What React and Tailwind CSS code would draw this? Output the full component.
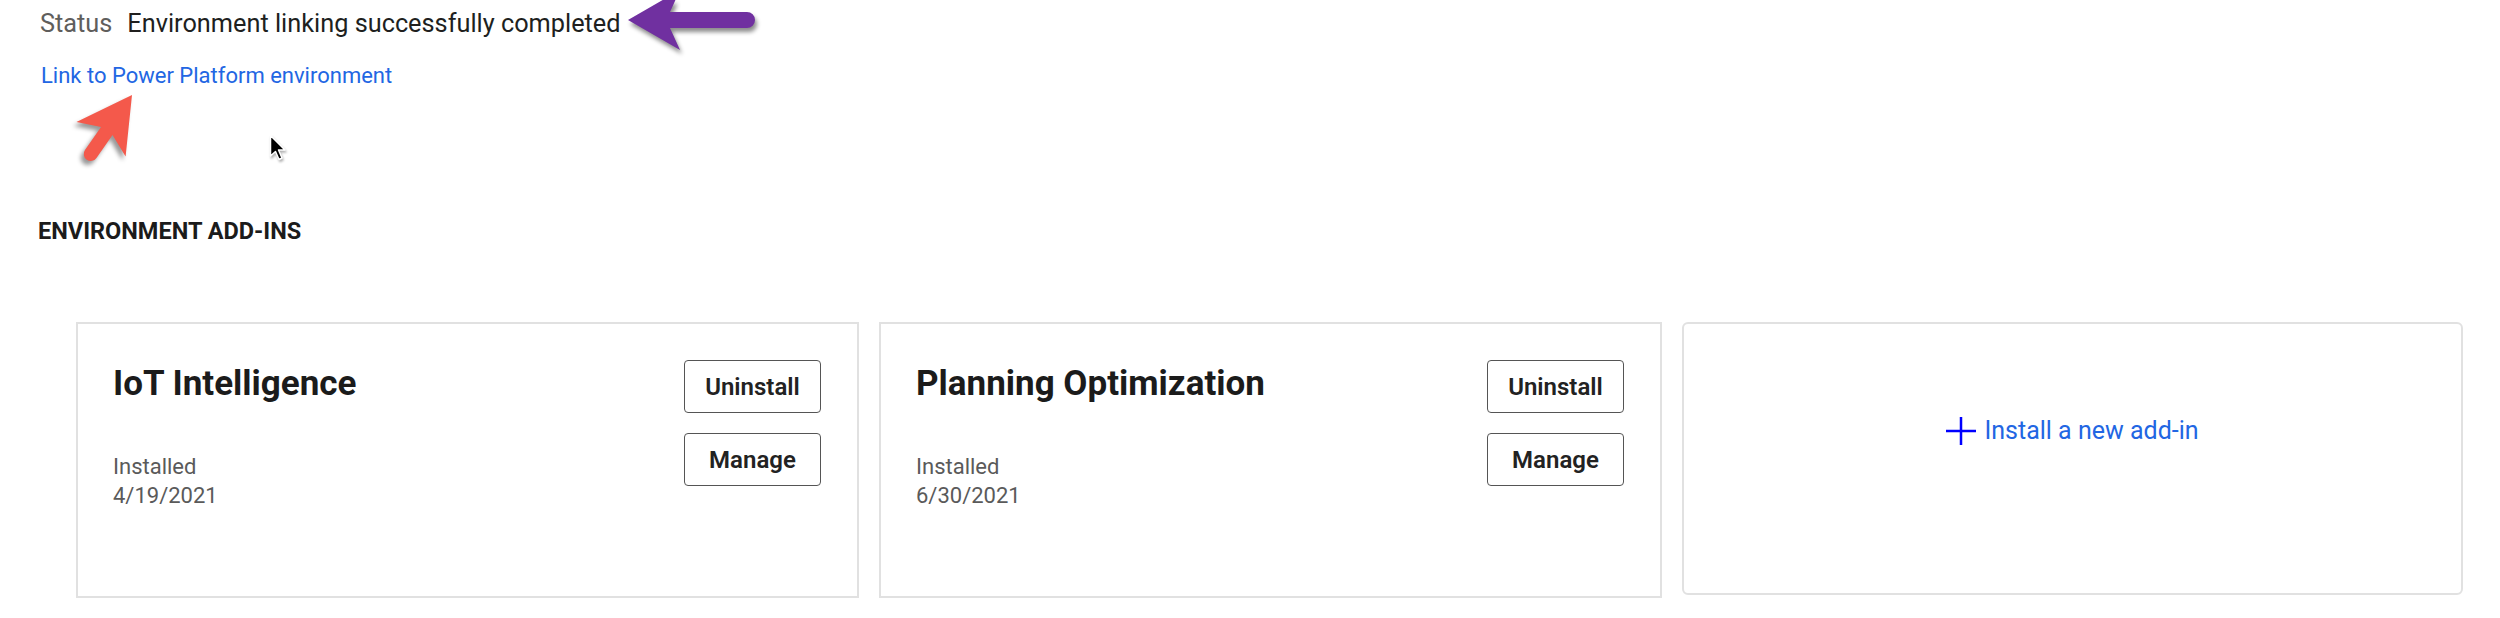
import React from 'react';

const addIns = [
  { name: 'IoT Intelligence', date: '4/19/2021' },
  { name: 'Planning Optimization', date: '6/30/2021' },
];

const PurpleArrow = () => (
  <svg
    className="absolute left-[620px] top-0 drop-shadow-[2px_4px_2px_rgba(0,0,0,0.45)]"
    width="150"
    height="62"
    viewBox="0 0 150 62"
  >
    <path d="M8 20 L60 -10 L50 12 L127 12 A8 8 0 0 1 127 28 L50 28 L60 50 Z" fill="#7030a0" />
  </svg>
);

const RedArrow = () => (
  <svg
    className="absolute left-0 top-0 drop-shadow-[-3px_4px_2px_rgba(0,0,0,0.4)]"
    width="200"
    height="200"
    viewBox="0 0 200 200"
  >
    <g transform="translate(132 95) rotate(-55)">
      <path d="M0 0 L-54 -30 L-44 -7 L-72 -7 A7 7 0 0 0 -72 7 L-44 7 L-54 30 Z" fill="#f4594b" />
    </g>
  </svg>
);

const Cursor = () => (
  <svg
    className="absolute left-[269px] top-[134px] drop-shadow-[1px_2px_1px_rgba(0,0,0,0.3)]"
    width="20"
    height="30"
    viewBox="0 0 20 30"
  >
    <path d="M1.5 1.5 V22 L6.5 17.5 L10 25.5 L13 24 L9.5 16 L16 16 Z" fill="#000" stroke="#fff" strokeWidth="1.5" strokeLinejoin="round" />
  </svg>
);

const AddInCard = ({ name, date }) => (
  <div className="w-[783px] h-[276px] border-2 border-[#e1e1e1] flex justify-between pl-[35px] pr-[36px] pt-[36px]">
    <div>
      <h3 className="text-[35px] leading-[48px] font-bold text-[#1b1b1b]">{name}</h3>
      <div className="mt-[44px] text-[22px] leading-[29px] text-[#5a5a5a]">
        <div>Installed</div>
        <div>{date}</div>
      </div>
    </div>
    <div className="flex flex-col gap-[20px]">
      <button className="w-[137px] h-[53px] border-[1.5px] border-[#555] rounded-[4px] text-[24px] font-semibold text-[#222]">
        Uninstall
      </button>
      <button className="w-[137px] h-[53px] border-[1.5px] border-[#555] rounded-[4px] text-[24px] font-semibold text-[#222]">
        Manage
      </button>
    </div>
  </div>
);

export default function App() {
  return (
    <div className="relative w-[2500px] h-[618px] bg-white overflow-hidden font-['Roboto',sans-serif]">
      <div className="pl-[40px] pt-[8px] flex items-baseline gap-[15px] text-[25.3px] leading-[32px]">
        <span className="text-[#605e5c]">Status</span>
        <span className="text-[#201f1e]">Environment linking successfully completed</span>
      </div>

      <div className="pl-[41px] mt-[21px]">
        <a className="text-[22px] leading-[30px] text-[#2266e3]">Link to Power Platform environment</a>
      </div>

      <h2 className="pl-[38px] mt-[126px] text-[23.5px] leading-[28px] font-bold text-[#1b1b1b]">
        ENVIRONMENT ADD-INS
      </h2>

      <div className="mt-[77px] pl-[76px] flex gap-[20px]">
        {addIns.map((a) => (
          <AddInCard key={a.name} name={a.name} date={a.date} />
        ))}
        <div className="w-[781px] h-[273px] border-2 border-[#e1e1e1] rounded-[6px] flex justify-center items-start pt-[89px]">
          <div className="flex items-center gap-[8px] text-[25px] leading-[36px] text-[#2266e3]">
            <svg width="30" height="28" viewBox="0 0 30 28">
              <path d="M15 0 V28 M0 14 H30" stroke="#0000ff" strokeWidth="2.5" />
            </svg>
            <span>Install a new add-in</span>
          </div>
        </div>
      </div>

      <PurpleArrow />
      <RedArrow />
      <Cursor />
    </div>
  );
}
